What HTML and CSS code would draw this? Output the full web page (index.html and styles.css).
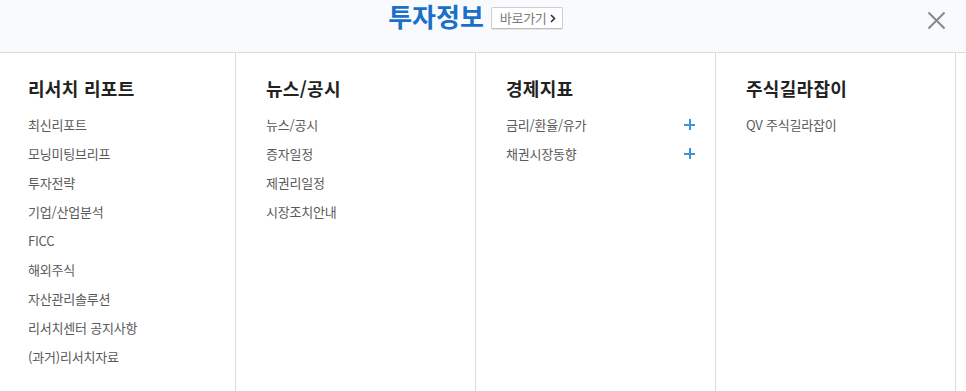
FILE: index.html
```html
<!DOCTYPE html>
<html lang="ko">
<head>
<meta charset="utf-8">
<title>투자정보</title>
<link rel="stylesheet" href="styles.css">
</head>
<body>
<div class="panel">
  <header class="top">
    <div class="title-wrap">
      <h1 class="title">투자정보</h1>
      <a class="go-btn" href="#">바로가기<span class="chev"><svg width="6" height="9" viewBox="0 0 6 9"><path d="M1 1 L4.5 4.5 L1 8" fill="none" stroke="#333" stroke-width="1.6"/></svg></span></a>
    </div>
    <button class="close" aria-label="닫기"><svg width="19" height="19" viewBox="0 0 19 19"><path d="M1.5 1.5 L17.5 17.5 M17.5 1.5 L1.5 17.5" stroke="#888" stroke-width="2" fill="none"/></svg></button>
  </header>
  <div class="cols">
    <section class="col col-first">
      <h2 class="col-title">리서치 리포트</h2>
      <ul class="list">
        <li>최신리포트</li>
        <li>모닝미팅브리프</li>
        <li>투자전략</li>
        <li>기업/산업분석</li>
        <li>FICC</li>
        <li>해외주식</li>
        <li>자산관리솔루션</li>
        <li>리서치센터 공지사항</li>
        <li>(과거)리서치자료</li>
      </ul>
    </section>
    <section class="col">
      <h2 class="col-title">뉴스/공시</h2>
      <ul class="list">
        <li>뉴스/공시</li>
        <li>증자일정</li>
        <li>제권리일정</li>
        <li>시장조치안내</li>
      </ul>
    </section>
    <section class="col">
      <h2 class="col-title">경제지표</h2>
      <ul class="list">
        <li class="has-sub">금리/환율/유가<span class="plus"></span></li>
        <li class="has-sub">채권시장동향<span class="plus"></span></li>
      </ul>
    </section>
    <section class="col">
      <h2 class="col-title">주식길라잡이</h2>
      <ul class="list">
        <li>QV 주식길라잡이</li>
      </ul>
    </section>
  </div>
</div>
</body>
</html>
```

FILE: styles.css
```css
* { box-sizing: border-box; }
html, body {
  margin: 0;
  padding: 0;
  background: #fff;
  font-family: "Noto Sans CJK KR", "Noto Sans", sans-serif;
}
.panel {
  width: 966px;
  height: 391px;
  overflow: hidden;
}
.top {
  height: 53px;
  padding-top: 3px;
  background: #f8fafd;
  border-bottom: 1px solid #dcdcdc;
  display: flex;
  align-items: flex-start;
  justify-content: center;
  position: relative;
}
.title-wrap {
  display: flex;
  align-items: flex-start;
  margin-right: 15px;
}
.title {
  margin: 0;
  font-size: 26px;
  line-height: 26px;
  font-weight: 700;
  color: #1b6fc8;
  letter-spacing: 0;
}
.go-btn {
  margin-left: 7px;
  margin-top: 4px;
  height: 22px;
  width: 72px;
  padding: 0 0 0 8px;
  border: 1px solid #cfcfcf;
  border-bottom-color: #bdbdbd;
  border-radius: 2px;
  background: #fff;
  box-shadow: 0 1px 0 #e6e6e6;
  display: flex;
  align-items: center;
  gap: 4px;
  font-size: 13px;
  color: #7a7a7a;
  text-decoration: none;
  line-height: 20px;
  letter-spacing: -0.3px;
}
.chev { display: flex; align-items: center; margin-top: 1px; }
.close {
  position: absolute;
  right: 20px;
  top: 11px;
  width: 19px;
  height: 19px;
  padding: 0;
  border: 0;
  background: none;
  display: flex;
}
.cols {
  display: grid;
  grid-template-columns: 236px 240px 240px 240px;
  height: 338px;
}
.col {
  border-right: 1px solid #dcdcdc;
  padding: 23px 20px 0 30px;
}
.col-first { padding-left: 28px; }
.col-title {
  margin: 0 0 10px;
  font-size: 18px;
  line-height: 24px;
  font-weight: 700;
  color: #222;
  letter-spacing: 0.3px;
}
.list {
  list-style: none;
  margin: 0;
  padding: 0;
}
.list li {
  font-size: 13px;
  line-height: 29px;
  height: 29px;
  color: #5a5a5a;
  letter-spacing: -0.2px;
  display: flex;
  align-items: center;
  justify-content: space-between;
}
.plus {
  position: relative;
  width: 11px;
  height: 11px;
  margin-right: 0;
}
.plus::before, .plus::after {
  content: "";
  position: absolute;
  background: #3b95d6;
}
.plus::before { left: 0; top: 4.5px; width: 11px; height: 2px; }
.plus::after { left: 4.5px; top: 0; width: 2px; height: 11px; }
```
